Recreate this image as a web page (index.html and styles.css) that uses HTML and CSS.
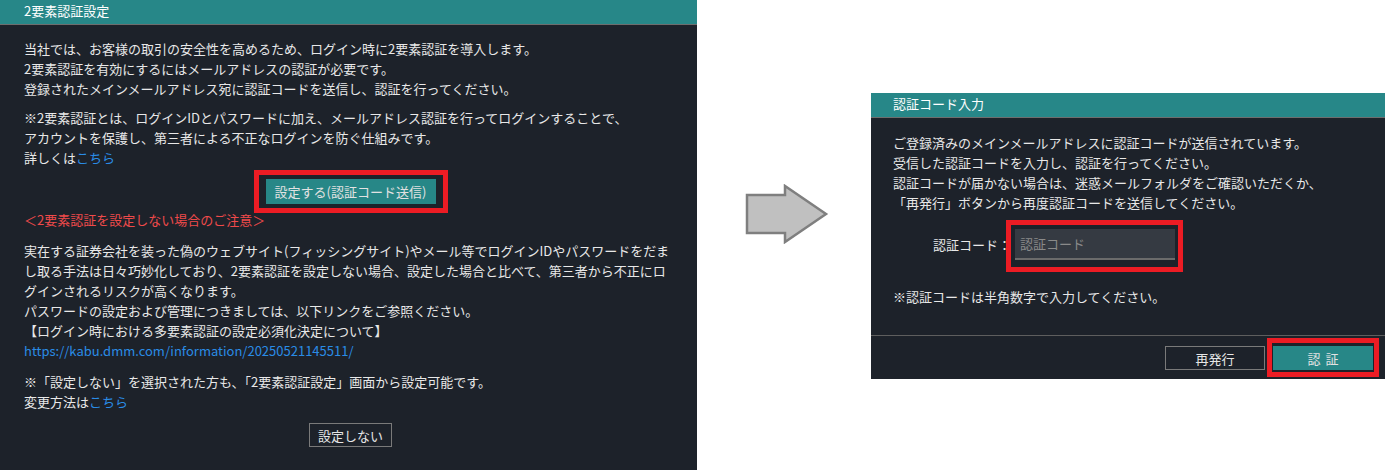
FILE: index.html
```html
<!DOCTYPE html>
<html lang="ja">
<head>
    <meta charset="UTF-8">
    <meta name="viewport" content="width=device-width, initial-scale=1.0">
    <title>2要素認証設定</title>
    <link rel="stylesheet" href="styles.css">
</head>
<body>
    <div class="page">
        <!-- step 1: setting dialog -->
        <section class="panel panel-setup">
            <h2 class="panel-title">2要素認証設定</h2>
            <div class="setup-body">
                <p class="lead">当社では、お客様の取引の安全性を高めるため、ログイン時に2要素認証を導入します。<br>2要素認証を有効にするにはメールアドレスの認証が必要です。<br>登録されたメインメールアドレス宛に認証コードを送信し、認証を行ってください。</p>
                <p>※2要素認証とは、ログインIDとパスワードに加え、メールアドレス認証を行ってログインすることで、<br>アカウントを保護し、第三者による不正なログインを防ぐ仕組みです。<br>詳しくは<a href="#" class="link">こちら</a></p>
                <div class="action">
                    <span class="mark mark-send">
                        <button class="btn btn-primary btn-send">設定する(認証コード送信)</button>
                    </span>
                </div>
                <p class="caution">＜2要素認証を設定しない場合のご注意＞</p>
                <p>実在する証券会社を装った偽のウェブサイト(フィッシングサイト)やメール等でログインIDやパスワードをだま<br>し取る手法は日々巧妙化しており、2要素認証を設定しない場合、設定した場合と比べて、第三者から不正にロ<br>グインされるリスクが高くなります。<br>パスワードの設定および管理につきましては、以下リンクをご参照ください。<br>【ログイン時における多要素認証の設定必須化決定について】<br><a href="#" class="link">https://kabu.dmm.com/information/20250521145511/</a></p>
                <p>※「設定しない」を選択された方も、「2要素認証設定」画面から設定可能です。<br>変更方法は<a href="#" class="link">こちら</a></p>
                <div class="action">
                    <button class="btn btn-outline">設定しない</button>
                </div>
            </div>
        </section>

        <svg class="arrow" viewBox="0 0 84 60">
            <polygon points="2,11 40,11 40,2 81,30 40,58 40,49 2,49" fill="#c0c0c0" stroke="#7f7f7f" stroke-width="2.5"/>
        </svg>

        <!-- step 2: code entry dialog -->
        <section class="panel panel-verify">
            <h2 class="panel-title">認証コード入力</h2>
            <div class="verify-body">
                <p>ご登録済みのメインメールアドレスに認証コードが送信されています。<br>受信した認証コードを入力し、認証を行ってください。<br>認証コードが届かない場合は、迷惑メールフォルダをご確認いただくか、<br>「再発行」ボタンから再度認証コードを送信してください。</p>
                <div class="code-row">
                    <label class="code-label" for="code">認証コード：</label>
                    <span class="mark mark-input">
                        <input id="code" class="code-input" type="text" placeholder="認証コード">
                    </span>
                </div>
                <p class="code-note">※認証コードは半角数字で入力してください。</p>
            </div>
            <div class="verify-footer">
                <button class="btn btn-outline btn-wide">再発行</button>
                <span class="mark mark-submit">
                    <button class="btn btn-primary btn-wide btn-spaced">認証</button>
                </span>
            </div>
        </section>
    </div>
</body>
</html>
```

FILE: styles.css
```css
* {
    box-sizing: border-box;
}
body {
    margin: 0;
    background: #fff;
    font-family: "Noto Sans CJK JP", "Noto Sans", sans-serif;
    font-size: 13px;
    color: #e8e8e8;
}
.page {
    display: flex;
    align-items: flex-start;
    height: 470px;
    overflow: hidden;
}
.panel {
    background: #1d222a;
    flex: none;
}
.panel-title {
    margin: 0;
    height: 25px;
    background: #278788;
    border-bottom: 1px solid #6e6e6e;
    font-size: 13px;
    font-weight: normal;
    line-height: 22px;
    color: #fff;
}
p {
    margin: 0 0 11px;
    line-height: 20px;
}
.link {
    color: #2a8ce6;
    text-decoration: none;
}

/* setting dialog */
.panel-setup {
    width: 697px;
    height: 470px;
}
.panel-setup .panel-title {
    padding: 0 24px;
}
.setup-body {
    padding: 14px 20px 0 24px;
}
.setup-body .lead {
    margin-bottom: 9px;
}
.action {
    display: flex;
    justify-content: center;
    margin: 11px 0 6px;
}
.setup-body .caution {
    margin-top: 0;
    color: #ef4a4a;
}

/* buttons */
.btn {
    font: inherit;
    font-size: 13px;
    height: 25px;
    padding: 0 15px;
    border: 0;
    background: none;
    color: #e6e6e6;
    cursor: pointer;
}
.btn-primary {
    background: #278787;
    color: #e2e2e2;
}
.btn-send {
    width: 170px;
    padding: 0;
    white-space: nowrap;
}
.btn-outline {
    height: 24px;
    padding: 0 8px;
    border: 1px solid #7a7a7a;
    background: transparent;
}
.btn-wide {
    width: 100px;
    height: 24px;
    padding: 0;
}
.btn-spaced {
    letter-spacing: 5px;
    padding-left: 5px;
}

/* red highlight frames */
.mark {
    display: flex;
    border: 5px solid #ec1c24;
}
.mark-send {
    padding: 4px 7px;
    margin: -9px -12px;
}
.mark-input {
    padding: 4px 3px 7px 4px;
    margin: -9px -8px -12px -9px;
}
.mark-submit {
    padding: 3px 1px 2px;
    margin: -8px -6px -7px;
}

.arrow {
    flex: none;
    width: 84px;
    height: 60px;
    margin: 184px 0 0 48px;
}

/* code entry dialog */
.panel-verify {
    width: 514px;
    margin: 93px 0 0 42px;
}
.panel-verify .panel-title {
    padding: 0 22px;
}
.verify-body {
    padding: 15px 22px 28px;
}
.verify-body p {
    margin: 0;
}
.code-row {
    display: flex;
    align-items: center;
    margin-top: 16px;
}
.code-label {
    width: 118px;
    margin-right: 4px;
    text-align: right;
    white-space: nowrap;
}
.code-input {
    width: 160px;
    height: 31px;
    padding: 0 5px;
    border: 0;
    border-bottom: 2px solid #6b6b6b;
    background: #353a42;
    font: inherit;
    font-size: 13px;
    color: #e8e8e8;
    outline: none;
}
.code-input::placeholder {
    color: #8a8a8a;
}
.verify-body .code-note {
    margin-top: 27px;
}
.verify-footer {
    display: flex;
    justify-content: flex-end;
    gap: 8px;
    padding: 10px 12px 9px;
    border-top: 1px solid #5e5e5e;
}
```
